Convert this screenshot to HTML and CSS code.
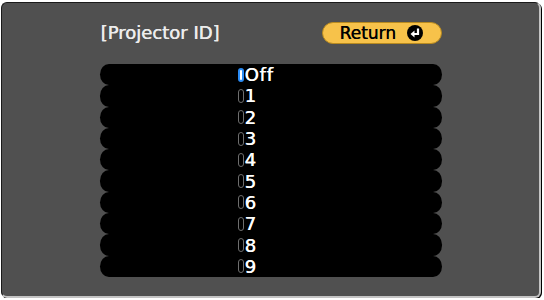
FILE: index.html
```html
<!DOCTYPE html>
<html lang="en">
<head>
    <meta charset="UTF-8">
    <title>Projector ID</title>
    <link rel="stylesheet" href="styles.css">
</head>
<body>
    <div class="panel">
        <div class="content">
            <div class="header">
                <div class="title">[Projector ID]</div>
                <div class="return-btn">
                    <span>Return</span>
                    <svg class="return-icon" width="16" height="16" viewBox="0 0 16 16">
                        <circle cx="8" cy="8" r="8" fill="#000"/>
                        <path d="M11 3.5 V9 H7" stroke="#fff" stroke-width="2.2" fill="none"/>
                        <path d="M3.5 9 L7.5 5.5 V12.5 Z" fill="#fff"/>
                    </svg>
                </div>
            </div>

            <div class="id-list">
                <div class="row"><span class="mark selected"></span>Off</div>
                <div class="row"><span class="mark"></span>1</div>
                <div class="row"><span class="mark"></span>2</div>
                <div class="row"><span class="mark"></span>3</div>
                <div class="row"><span class="mark"></span>4</div>
                <div class="row"><span class="mark"></span>5</div>
                <div class="row"><span class="mark"></span>6</div>
                <div class="row"><span class="mark"></span>7</div>
                <div class="row"><span class="mark"></span>8</div>
                <div class="row"><span class="mark"></span>9</div>
            </div>
        </div>
    </div>
</body>
</html>
```

FILE: styles.css
```css
body {
    margin: 0;
    padding: 2px 0 0 1px;
    background: #fff;
    font-family: "DejaVu Sans", Verdana, sans-serif;
}

.panel {
    box-sizing: border-box;
    width: 540px;
    height: 296px;
    background: #505050;
    border-top: 1px solid #1a1a1a;
    border-left: 1px solid #1a1a1a;
    border-right: 2px solid #c4c4c4;
    border-bottom: 2px solid #c4c4c4;
    border-radius: 6px;
    box-shadow: 1px 1px 0 #000;
    padding-top: 18px;
}

.content {
    width: 342px;
    margin: 0 auto;
}

.header {
    display: flex;
    justify-content: space-between;
    align-items: center;
    height: 23px;
    margin-bottom: 20px;
}

.title {
    color: #ececec;
    font-size: 18px;
    padding-left: 1px;
    text-shadow: 0.4px 0 0 #ececec;
}

.return-btn {
    box-sizing: border-box;
    display: flex;
    align-items: center;
    width: 120px;
    height: 22px;
    padding-left: 17px;
    background: #f7c24a;
    border: 1px solid #b88a20;
    border-radius: 11px;
    color: #000;
    font-size: 17px;
    text-shadow: 0.4px 0 0 #000;
}

.return-icon {
    margin-left: 11px;
}

.row {
    display: flex;
    align-items: center;
    height: 21.3px;
    padding-left: 138px;
    background: #000;
    border-radius: 9px / 10.6px;
    color: #fff;
    font-size: 18px;
    letter-spacing: 0.8px;
    text-shadow: 0.4px 0 0 #fff;
}

.mark {
    box-sizing: border-box;
    width: 6px;
    height: 14px;
    margin-right: 1px;
    border: 1px solid #6e6e6e;
    border-radius: 3px;
}

.mark.selected {
    border: 2px solid #2b8cf5;
    background: #fff;
}
```
